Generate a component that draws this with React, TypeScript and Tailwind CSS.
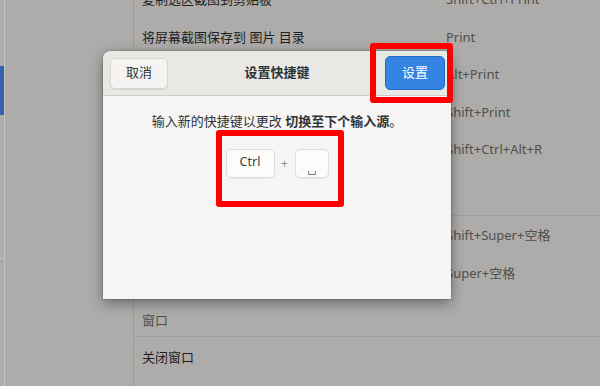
type Row = { label: string; accel: string }

const topRows: Row[] = [
  { label: '复制选区截图到剪贴板', accel: 'Shift+Ctrl+Print' },
  { label: '将屏幕截图保存到 图片 目录', accel: 'Print' },
  { label: '将窗口截图保存到 图片 目录', accel: 'Alt+Print' },
  { label: '将选区截图保存到 图片 目录', accel: 'Shift+Print' },
  { label: '录制屏幕录像', accel: 'Shift+Ctrl+Alt+R' },
]

const typingRows: Row[] = [
  { label: '切换至上个输入源', accel: 'Shift+Super+空格' },
  { label: '切换至下个输入源', accel: 'Super+空格' },
]

function ShortcutRow({ label, accel }: Row) {
  return (
    <div className="flex h-[37.5px] items-center pl-2">
      <span className="w-[304px] shrink-0 text-[#1f1f1f]">{label}</span>
      <span className="text-[#4f4f4e]">{accel}</span>
    </div>
  )
}

function KeyCap({ children, className }: { children: React.ReactNode; className: string }) {
  return (
    <div
      className={`${className} flex h-[29px] justify-center rounded-[5px] border border-[#dfddda] bg-[#fcfcfb] shadow-[0_1px_0_rgba(0,0,0,0.04)]`}
    >
      {children}
    </div>
  )
}

function ShortcutDialog() {
  return (
    <div className="absolute left-[103px] top-[51px] flex h-[248px] w-[348px] flex-col overflow-hidden rounded-t-[8px] bg-[#f6f5f4] shadow-[0_0_0_1px_rgba(0,0,0,0.12),0_4px_14px_rgba(0,0,0,0.4)]">
      <div className="grid h-[45px] shrink-0 grid-cols-[1fr_auto_1fr] items-center border-b border-[#cfcdca] bg-[#e9e8e5]">
        <div className="pl-[7px]">
          <button className="flex h-[31px] w-[58px] items-center justify-center rounded-[5px] border border-[#d9d7d3] bg-[#f5f4f2] text-[#2e3436] shadow-[0_1px_1px_rgba(0,0,0,0.08)]">
            取消
          </button>
        </div>
        <div className="font-bold text-[#2e3436]">设置快捷键</div>
        <div className="flex justify-end pr-[6px]">
          <button className="flex h-[34px] w-[60px] items-center justify-center rounded-[5px] border border-[#1f6dcc] bg-[#3584e4] text-white">
            设置
          </button>
        </div>
      </div>

      <div className="flex flex-col items-center pt-[16px]">
        <p className="leading-[18px] text-[#2e3436]">
          输入新的快捷键以更改 <span className="font-bold">切换至下个输入源</span>。
        </p>
        <div className="mt-[19px] flex items-center">
          <KeyCap className="w-[49px] items-center pb-[2px]">
            <span className="text-[12.5px] text-[#3a3e40]">Ctrl</span>
          </KeyCap>
          <span className="w-[20px] text-center text-[12px] text-[#8e8e8c]">+</span>
          <KeyCap className="w-[34px] items-end pb-[2px]">
            <svg width="10" height="4" viewBox="0 0 10 4">
              <path d="M1.5 0 V3.5 H8.5 V0" fill="none" stroke="#7a7a78" strokeWidth="1" />
            </svg>
          </KeyCap>
        </div>
      </div>
    </div>
  )
}

export default function App() {
  return (
    <div className="relative flex h-[386px] w-[600px] overflow-hidden bg-[#adacaa] font-['Noto_Sans','Noto_Sans_CJK_SC',sans-serif] text-[13px]">
      {/* far left sidebar edge */}
      <div className="flex w-[5px] shrink-0 flex-col border-r border-[#c3c2c0]">
        <div className="h-[66px]" />
        <div className="h-[49px] bg-[#3462ad]" />
        <div className="h-[143px]" />
        <div className="h-px bg-[#c3c2c0]" />
      </div>

      {/* category sidebar */}
      <div className="w-[129px] shrink-0 border-r border-[#9d9c9a]" />

      {/* shortcut list */}
      <div className="-mt-[19px] flex flex-1 flex-col">
        {topRows.map((r) => (
          <ShortcutRow key={r.accel} {...r} />
        ))}

        <div className="flex h-[46.5px] items-center pl-2 pt-[14px] text-[#4f4f4e]">打字</div>
        <div className="border-t border-[#9f9e9c] pt-px">
          {typingRows.map((r) => (
            <ShortcutRow key={r.accel} {...r} />
          ))}
        </div>

        <div className="flex h-[44px] items-center pl-2 pt-[14px] text-[#4f4f4e]">窗口</div>
        <div className="border-t border-[#9f9e9c] pt-[2px]">
          <ShortcutRow label="关闭窗口" accel="" />
        </div>
      </div>

      <ShortcutDialog />

      {/* annotation highlights */}
      <div className="absolute left-[370px] top-[43px] h-[60px] w-[83px] rounded-[3px] border-[6px] border-[#ff0000]" />
      <div className="absolute left-[216px] top-[130px] h-[77px] w-[128px] rounded-[3px] border-[6px] border-[#ff0000]" />
    </div>
  )
}
